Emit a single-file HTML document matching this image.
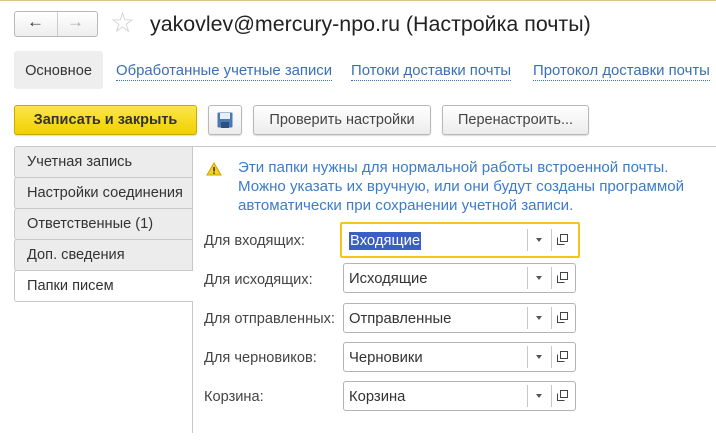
<!DOCTYPE html>
<html><head><meta charset="utf-8"><style>
*{box-sizing:border-box;margin:0;padding:0}
body{width:716px;height:446px;background:#fff;font-family:"Liberation Sans",Arial,sans-serif;position:relative;overflow:hidden;color:#333}
.a{position:absolute}
.btn{position:absolute;border:1px solid #b8b8b8;border-radius:3px;background:linear-gradient(#fff,#ececec);font-size:14.5px;color:#444;text-align:center;line-height:29px;box-shadow:0 1px 1px rgba(0,0,0,.15)}
.link{position:absolute;top:63px;font-size:14.9px;color:#3a6fb5;border-bottom:1px dotted #3a6fb5;line-height:17px}
.tab{position:absolute;left:14px;width:179px;height:32px;border:1px solid #c8c8c8;border-radius:3px 0 0 3px;background:#ececec;font-size:14.6px;color:#333;padding-left:12px;line-height:30px}
.lbl{position:absolute;left:204px;font-size:14.6px;color:#444}
.fld{position:absolute;left:343px;width:233px;height:30px;border:1px solid #b4b4b4;border-radius:3px;background:#fff;font-size:14.8px;color:#333;line-height:30px;padding-left:5px}
.fld .d1{position:absolute;left:183px;top:3px;width:1px;height:22px;background:#c8c8c8}
.fld .d2{position:absolute;left:207px;top:3px;width:1px;height:22px;background:#c8c8c8}
.fld .ar{position:absolute;left:192px;top:12px;width:0;height:0;border-left:3px solid transparent;border-right:3px solid transparent;border-top:4px solid #555}
.fld svg{position:absolute;left:213px;top:8px}
</style></head><body>
<div class="a" style="left:0;top:0;width:716px;height:1px;background:#d8c78a"></div>
<div class="a" style="left:14px;top:11px;width:84px;height:26px;border:1px solid #b8b8b8;border-radius:3px;background:linear-gradient(#fff,#eee)"></div>
<div class="a" style="left:57px;top:12px;width:1px;height:24px;background:#ccc"></div>
<div class="a" style="left:27px;top:12px;font-size:17px;color:#333;font-weight:bold">&#8592;</div>
<div class="a" style="left:67px;top:12px;font-size:17px;color:#aaa;font-weight:bold">&#8594;</div>
<div class="a" style="left:110px;top:7px;font-size:28px;color:#ccc;line-height:32px">&#9734;</div>
<div class="a" style="left:150px;top:12px;font-size:21.4px;color:#222">yakovlev@mercury-npo.ru (Настройка почты)</div>
<div class="a" style="left:14px;top:51px;width:89px;height:38px;background:#eeeeee;border-radius:3px;font-size:14.6px;color:#333;line-height:40px;text-align:center">Основное</div>
<div class="link" style="left:116px">Обработанные учетные записи</div>
<div class="link" style="left:351px">Потоки доставки почты</div>
<div class="link" style="left:533px">Протокол доставки почты</div>
<div class="btn" style="left:14px;top:105px;width:183px;height:30px;background:linear-gradient(#fbe64a,#f2d000);border-color:#c9ac00;font-weight:bold;color:#333">Записать и закрыть</div>
<div class="btn" style="left:208px;top:105px;width:34px;height:30px">
<svg width="16" height="16" style="position:absolute;left:8px;top:6px"><rect x="0.5" y="0.5" width="15" height="15" rx="1" fill="#4a78b0"/><rect x="3" y="1" width="10" height="6" fill="#e8eef6"/><rect x="4" y="10" width="8" height="6" fill="#2d4f80"/></svg></div>
<div class="btn" style="left:253px;top:105px;width:178px;height:30px">Проверить настройки</div>
<div class="btn" style="left:442px;top:105px;width:147px;height:30px">Перенастроить...</div>
<div class="a" style="left:192px;top:146px;width:524px;height:1px;background:#c8c8c8"></div>
<div class="a" style="left:192px;top:146px;width:1px;height:287px;background:#c8c8c8"></div>
<div class="tab" style="top:146px">Учетная запись</div>
<div class="tab" style="top:177px">Настройки соединения</div>
<div class="tab" style="top:208px">Ответственные (1)</div>
<div class="tab" style="top:239px">Доп. сведения</div>
<div class="tab" style="top:270px;background:#fff;border-right:none">Папки писем</div>
<svg class="a" style="left:206px;top:162px" width="16" height="14"><path d="M8 1 L15 13 L1 13 Z" fill="#f5d320" stroke="#c9a400"/><rect x="7.3" y="5" width="1.5" height="4.5" fill="#333"/><rect x="7.3" y="10.5" width="1.5" height="1.5" fill="#333"/></svg>
<div class="a" style="left:238px;top:158px;font-size:15.1px;color:#3d7cc9;line-height:19px">Эти папки нужны для нормальной работы встроенной почты.<br>Можно указать их вручную, или они будут созданы программой<br>автоматически при сохранении учетной записи.</div>
<div class="a" style="left:340px;top:222px;width:240px;height:36px;border:2px solid #f5c518;border-radius:2px"></div>
<div class="lbl" style="top:233px">Для входящих:</div>
<div class="fld" style="top:225px;border-color:transparent"><span style="background:#3b5fc0;color:#fff;padding:1px 1px">Входящие</span><div class="d1"></div><div class="d2"></div><div class="ar"></div><svg width="11" height="11"><rect x="3.5" y="0.5" width="7" height="7" fill="none" stroke="#444"/><path d="M0.5 3.5V10.5H7.5" fill="none" stroke="#444"/></svg></div>
<div class="lbl" style="top:272px">Для исходящих:</div>
<div class="fld" style="top:263px">Исходящие<div class="d1"></div><div class="d2"></div><div class="ar"></div><svg width="11" height="11"><rect x="3.5" y="0.5" width="7" height="7" fill="none" stroke="#444"/><path d="M0.5 3.5V10.5H7.5" fill="none" stroke="#444"/></svg></div>
<div class="lbl" style="top:311px">Для отправленных:</div>
<div class="fld" style="top:303px">Отправленные<div class="d1"></div><div class="d2"></div><div class="ar"></div><svg width="11" height="11"><rect x="3.5" y="0.5" width="7" height="7" fill="none" stroke="#444"/><path d="M0.5 3.5V10.5H7.5" fill="none" stroke="#444"/></svg></div>
<div class="lbl" style="top:350px">Для черновиков:</div>
<div class="fld" style="top:342px">Черновики<div class="d1"></div><div class="d2"></div><div class="ar"></div><svg width="11" height="11"><rect x="3.5" y="0.5" width="7" height="7" fill="none" stroke="#444"/><path d="M0.5 3.5V10.5H7.5" fill="none" stroke="#444"/></svg></div>
<div class="lbl" style="top:389px">Корзина:</div>
<div class="fld" style="top:381px">Корзина<div class="d1"></div><div class="d2"></div><div class="ar"></div><svg width="11" height="11"><rect x="3.5" y="0.5" width="7" height="7" fill="none" stroke="#444"/><path d="M0.5 3.5V10.5H7.5" fill="none" stroke="#444"/></svg></div>
</body></html>
